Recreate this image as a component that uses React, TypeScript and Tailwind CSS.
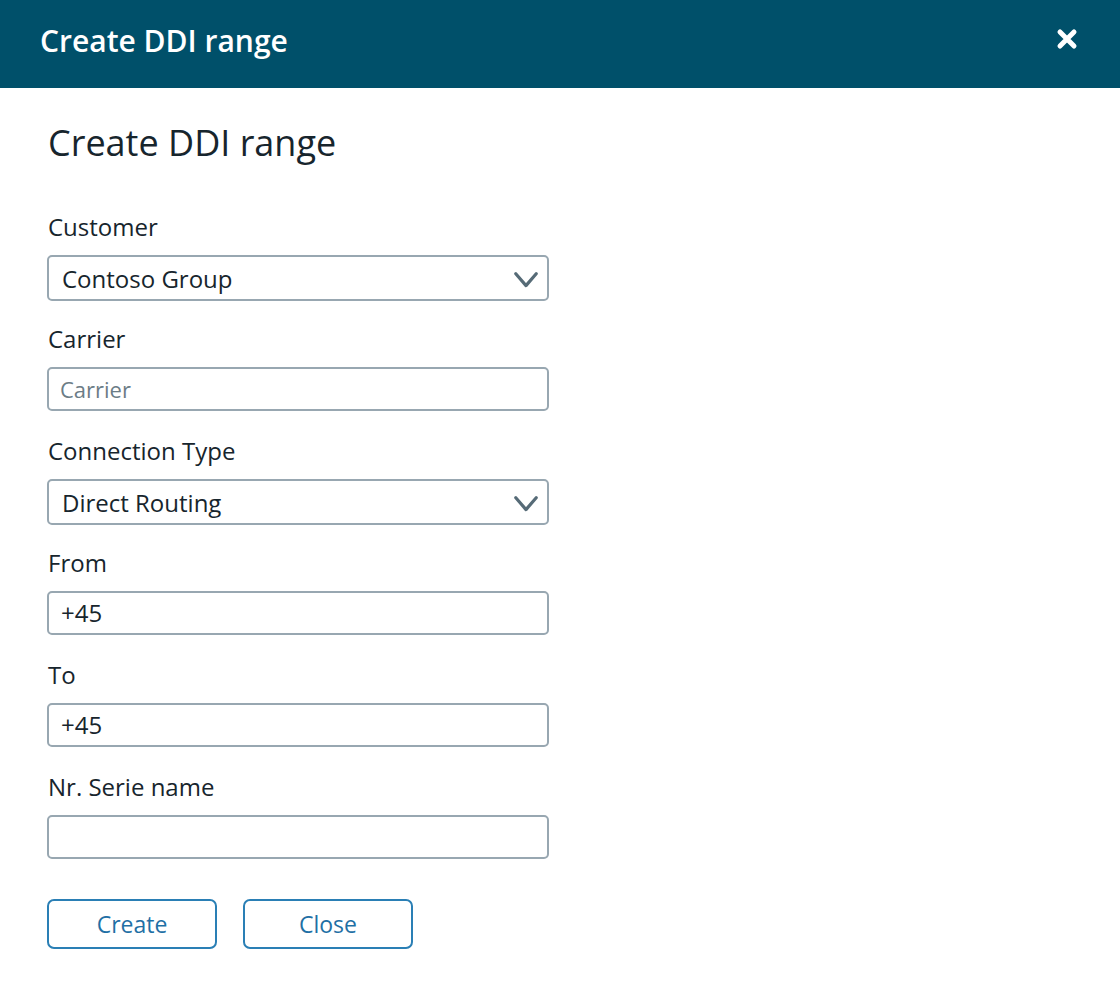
import { useState } from "react";
import type { ComponentProps, ReactNode } from "react";
import { clsx } from "clsx";

const CUSTOMERS = ["Contoso Group"];
const CONNECTION_TYPES = ["Direct Routing"];

const controlStyles =
  "w-full rounded-[5px] border-2 border-[#98a7b1] bg-white pr-3 text-2xl text-[#17252d] outline-none placeholder:text-[22px] placeholder:text-[#6b7c86] focus:border-[#2a7fb5]";

type FieldProps = {
  id: string;
  label: string;
  children: ReactNode;
};

const Field = ({ id, label, children }: FieldProps) => (
  <div className="min-h-28">
    <label htmlFor={id} className="mb-2 block pl-px text-2xl leading-10">
      {label}
    </label>
    {children}
  </div>
);

type TextFieldProps = ComponentProps<"input"> & { id: string; label: string };

const TextField = ({ id, label, className, ...props }: TextFieldProps) => (
  <Field id={id} label={label}>
    <input
      id={id}
      type="text"
      className={clsx(controlStyles, "h-11 pb-0.5", className ?? "pl-3")}
      {...props}
    />
  </Field>
);

type SelectFieldProps = { id: string; label: string; options: string[] };

const SelectField = ({ id, label, options }: SelectFieldProps) => (
  <Field id={id} label={label}>
    <div className="relative">
      <select
        id={id}
        className={clsx(
          controlStyles,
          "h-[46px] appearance-none pt-0.5 pl-[13px]"
        )}
      >
        {options.map((option) => (
          <option key={option}>{option}</option>
        ))}
      </select>
      <svg
        viewBox="0 0 24 16"
        className="pointer-events-none absolute top-[17px] right-[11px] h-4 w-6"
        fill="none"
        stroke="#566b77"
        strokeWidth="3.2"
        strokeLinecap="round"
        aria-hidden="true"
      >
        <path d="M1.8 1.8 12 13.6 22.2 1.8" strokeLinejoin="round" />
      </svg>
    </div>
  </Field>
);

const OutlineButton = (props: ComponentProps<"button">) => (
  <button
    type="button"
    className="h-[50px] w-[170px] cursor-pointer rounded-[7px] border-2 border-[#2a7fb5] bg-white text-[23px] text-[#1f70a5] hover:bg-[#eef6fb]"
    {...props}
  />
);

export default function App() {
  const [from, setFrom] = useState("+45");
  const [to, setTo] = useState("+45");

  return (
    <div className="min-h-screen bg-white font-['Segoe_UI','Open_Sans',sans-serif] text-[#17252d]">
      <header className="flex items-start justify-between bg-[#00506a] pt-5 pr-[42px] pb-[26px] pl-10">
        <h1 className="text-[30px] leading-[42px] font-semibold text-white">
          Create DDI range
        </h1>
        <button
          type="button"
          aria-label="Close dialog"
          className="mt-2 cursor-pointer text-white"
        >
          <svg
            viewBox="0 0 22 22"
            className="size-[22px]"
            fill="none"
            stroke="currentColor"
            strokeWidth="5"
            strokeLinecap="round"
          >
            <path d="M4 4 18 18M18 4 4 18" />
          </svg>
        </button>
      </header>

      <main className="px-[47px] pt-[31px] pb-14">
        <h2 className="mb-10 pl-px text-4xl leading-[48px]">
          Create DDI range
        </h2>
        <form className="max-w-[502px]" onSubmit={(e) => e.preventDefault()}>
          <SelectField id="customer" label="Customer" options={CUSTOMERS} />
          <TextField
            id="carrier"
            label="Carrier"
            placeholder="Carrier"
            className="pl-[11px]"
          />
          <SelectField
            id="connection-type"
            label="Connection Type"
            options={CONNECTION_TYPES}
          />
          <TextField
            id="from"
            label="From"
            value={from}
            onChange={(e) => setFrom(e.target.value)}
          />
          <TextField
            id="to"
            label="To"
            value={to}
            onChange={(e) => setTo(e.target.value)}
          />
          <TextField id="serie-name" label="Nr. Serie name" />
          <div className="mt-5 flex flex-wrap gap-[26px]">
            <OutlineButton type="submit">Create</OutlineButton>
            <OutlineButton>Close</OutlineButton>
          </div>
        </form>
      </main>
    </div>
  );
}
